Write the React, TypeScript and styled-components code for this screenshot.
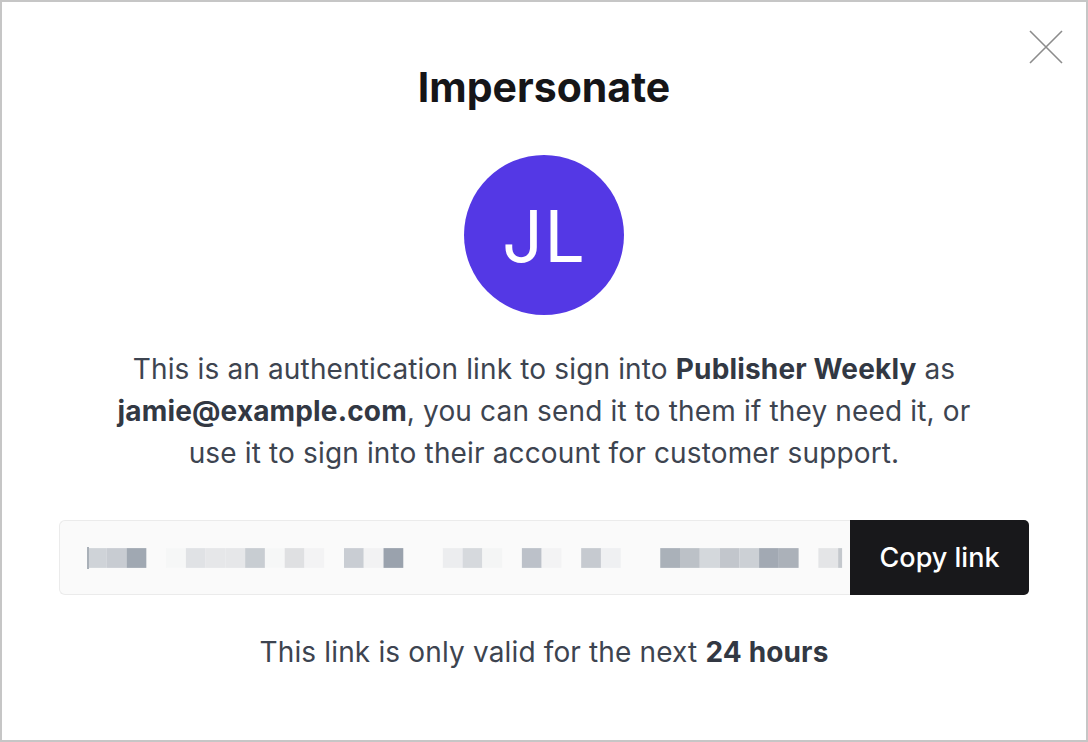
import React from 'react';
import styled, { createGlobalStyle } from 'styled-components';

const GlobalStyle = createGlobalStyle`
  html, body {
    margin: 0;
    padding: 0;
    background: #ffffff;
  }
  * {
    box-sizing: border-box;
  }
`;

const Modal = styled.div`
  position: relative;
  width: 1088px;
  height: 742px;
  border: 2px solid #c6c6c6;
  background: #ffffff;
  display: flex;
  flex-direction: column;
  align-items: center;
  padding: 61px 57px 0 57px;
  font-family: 'Inter', 'Noto Sans', sans-serif;
`;

const CloseButton = styled.button`
  position: absolute;
  top: 27px;
  right: 22px;
  width: 36px;
  height: 36px;
  padding: 0;
  border: none;
  background: transparent;
  display: flex;
  align-items: center;
  justify-content: center;
  cursor: pointer;
`;

const Title = styled.h1`
  margin: 0;
  font-size: 41px;
  line-height: 48px;
  font-weight: 700;
  color: #151518;
`;

const Avatar = styled.div`
  margin-top: 44px;
  width: 160px;
  height: 160px;
  border-radius: 50%;
  background: #5438e5;
  color: #ffffff;
  display: flex;
  align-items: center;
  justify-content: center;
  font-size: 72px;
  font-weight: 400;
  letter-spacing: 1px;
`;

const Description = styled.p`
  margin: 33px 0 0 0;
  max-width: 880px;
  text-align: center;
  font-size: 28px;
  line-height: 42px;
  letter-spacing: 0.15px;
  color: #3d4450;

  strong {
    font-weight: 700;
    color: #323843;
  }
`;

const LinkRow = styled.div`
  margin-top: 46px;
  width: 100%;
  height: 75px;
  display: flex;
`;

const LinkField = styled.div`
  flex: 1;
  position: relative;
  display: flex;
  align-items: center;
  padding-left: 27px;
  background: #fafafa;
  border: 1px solid #ebebeb;
  border-right: none;
  border-radius: 6px 0 0 6px;
  overflow: hidden;
`;

const Caret = styled.span`
  position: absolute;
  left: 27px;
  top: 26px;
  width: 2px;
  height: 22px;
  background: #a9b0b8;
`;

const CopyButton = styled.button`
  width: 179px;
  height: 100%;
  border: none;
  border-radius: 0 5px 5px 0;
  background: #18181b;
  color: #ffffff;
  font-family: 'Inter', 'Noto Sans', sans-serif;
  font-size: 27px;
  font-weight: 500;
  cursor: pointer;
`;

const Footnote = styled.p`
  margin: 41px 0 0 0;
  font-size: 28px;
  line-height: 32px;
  letter-spacing: 0.15px;
  color: #3d4450;

  strong {
    font-weight: 700;
    color: #323843;
  }
`;

// blurred link, drawn as pixel cells (x offset from start, width, colour)
const cells: [number, number, string][] = [
  [0, 18, '#cfd3d8'],
  [18, 20, '#c8ccd2'],
  [38, 20, '#a0a8b2'],
  [78, 20, '#f6f7f7'],
  [98, 20, '#e0e2e5'],
  [118, 20, '#e6e7e9'],
  [138, 20, '#e6e7e9'],
  [158, 20, '#c8cdd2'],
  [178, 20, '#f6f7f7'],
  [198, 20, '#dfe0e2'],
  [218, 20, '#f3f3f4'],
  [258, 20, '#c9cdd3'],
  [278, 20, '#f2f2f3'],
  [298, 20, '#9aa2ad'],
  [358, 20, '#ecedef'],
  [378, 20, '#d6d9dd'],
  [398, 20, '#f4f5f5'],
  [438, 20, '#bcc1c9'],
  [458, 20, '#f3f3f4'],
  [498, 20, '#c6cad0'],
  [518, 20, '#eff0f2'],
  [578, 20, '#aab1b9'],
  [598, 20, '#bcc1c7'],
  [618, 20, '#d4d8dc'],
  [638, 20, '#c2c6cc'],
  [658, 20, '#ccd0d5'],
  [678, 20, '#a2a9b3'],
  [698, 20, '#abb1b9'],
  [738, 20, '#e4e5e7'],
  [758, 4, '#c4c8cd'],
];

const BlurredLink: React.FC = () => (
  <svg width="770" height="20" viewBox="0 0 770 20" style={{ marginLeft: 2 }}>
    {cells.map(([x, w, c]) => (
      <rect key={x} x={x} y={0} width={w} height={20} fill={c} />
    ))}
  </svg>
);

const CloseIcon: React.FC = () => (
  <svg width="34" height="34" viewBox="0 0 34 34" fill="none">
    <path d="M1 1 L33 33 M33 1 L1 33" stroke="#8c8c8c" strokeWidth="1.6" />
  </svg>
);

const App: React.FC = () => {
  return (
    <>
      <GlobalStyle />
      <Modal>
        <CloseButton aria-label="Close">
          <CloseIcon />
        </CloseButton>
        <Title>Impersonate</Title>
        <Avatar>JL</Avatar>
        <Description>
          This is an authentication link to sign into <strong>Publisher Weekly</strong> as{' '}
          <strong>jamie@example.com</strong>, you can send it to them if they need it, or use it
          to sign into their account for customer support.
        </Description>
        <LinkRow>
          <LinkField>
            <Caret />
            <BlurredLink />
          </LinkField>
          <CopyButton>Copy link</CopyButton>
        </LinkRow>
        <Footnote>
          This link is only valid for the next <strong>24 hours</strong>
        </Footnote>
      </Modal>
    </>
  );
};

export default App;
